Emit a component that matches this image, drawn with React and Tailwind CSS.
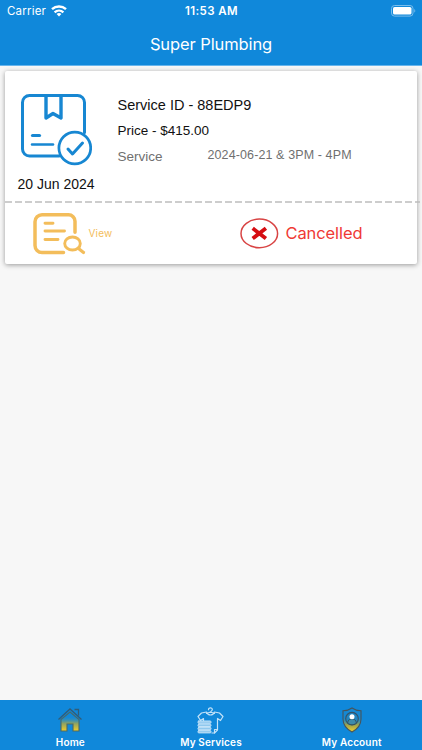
import React from 'react';

const Wifi = () => (
  <svg width="16" height="12" viewBox="0 0 16 12" fill="none" stroke="#fff" strokeWidth="2.4">
    <path d="M1 4.200C5 .5 11 .5 15 4.200" />
    <path d="M3.600 7.300c2.600-2.300 6.200-2.300 8.800 0" />
    <path d="M5.600 9C7.100 7.700 8.900 7.700 10.400 9L8 11.600Z" fill="#fff" stroke="none" />
  </svg>
);

const Battery = () => (
  <svg width="25" height="12" viewBox="0 0 25 12" fill="none">
    <rect x=".5" y=".5" width="21.5" height="10.600" rx="3" stroke="#79bdec" />
    <rect x="2" y="2" width="18.500" height="7.600" rx="1.600" fill="#fff" />
    <path d="M23.300 4v3.600c1.300-.5 1.300-3.100 0-3.600Z" fill="#79bdec" />
  </svg>
);

const PackageIcon = () => (
  <svg width="72" height="73" viewBox="0 0 72 73" fill="none" stroke="#1787d2" strokeWidth="3" strokeLinecap="round" strokeLinejoin="round">
    <path d="M39 63H9.500a7 7 0 0 1-7-7V9.500a7 7 0 0 1 7-7h48a7 7 0 0 1 7 7v30" />
    <path d="M26 3v22l7-4.500 8 4.500V3" strokeWidth="3.400" />
    <path d="M12.500 42.500h7" strokeWidth="3.200" />
    <path d="M12 51.500h21" strokeWidth="2.500" />
    <circle cx="54.800" cy="55" r="15.900" fill="#fff" strokeWidth="2.700" />
    <path d="m48 56 4.500 5L62.500 50" strokeWidth="3" />
  </svg>
);

const ViewIcon = () => (
  <svg width="53" height="42" viewBox="0 0 53 42" fill="none" stroke="#f3bd5b" strokeWidth="3.500" strokeLinecap="round" strokeLinejoin="round">
    <path d="M30.500 39.500H9a7 7 0 0 1-7-7V8.800a7 7 0 0 1 7-7h26.500a6.500 6.500 0 0 1 6.500 6.500v11" />
    <path d="M12 10.200h8M12 18h19.500M12 26.500h13" strokeWidth="2.900" />
    <ellipse cx="39.500" cy="30.500" rx="7.800" ry="6.500" strokeWidth="2.900" />
    <path d="m45.500 35.500 5 4" strokeWidth="3.200" />
  </svg>
);

const CancelIcon = () => (
  <svg width="39" height="31" viewBox="0 0 39 31" fill="none">
    <ellipse cx="19.300" cy="15.400" rx="18.300" ry="14.300" stroke="#d84444" strokeWidth="1.500" />
    <path d="m12.700 10.300 13.200 10.200M25.900 10.300 12.700 20.500" stroke="#d50d12" strokeWidth="3.800" />
  </svg>
);

const HomeIcon = () => (
  <svg width="26" height="26" viewBox="0 0 26 26" fill="none">
    <defs>
      <linearGradient id="houseFill" x1="0" y1="0" x2="0" y2="1">
        <stop offset=".2" stopColor="#1088da" stopOpacity="0" />
        <stop offset=".6" stopColor="#8ea263" />
        <stop offset="1" stopColor="#f2cd27" />
      </linearGradient>
    </defs>
    <path d="M4 12.500 13 5l9 7.500v11.500h-6v-7h-6v7H4Z" fill="url(#houseFill)" stroke="#4a6a67" strokeWidth="1.100" />
    <path d="M1.500 12.500 13 2l11.500 10.500M17.500 2.500H21.500v6" stroke="#315d78" strokeWidth="1.300" />
  </svg>
);

const ShirtIcon = () => (
  <svg width="27" height="27" viewBox="0 0 27 27" fill="none" stroke="#c3e2f8" strokeWidth="1.200" strokeLinejoin="round" strokeLinecap="round">
    <path d="M11.500 2.700C11.500.2 15.600.3 15.300 2.800 15.200 4 13.500 3.800 13.500 5.500M9.500 6.500l4-1.500 4 1.500" />
    <path d="M6.500 14V11.500L3.500 13.500 1 9.500 4.500 6 9.500 5c1.500 4 6.500 4 8 0l5 1L26 9.500 23.500 13.500l-3-2V23l-3 3H15" />
    <path d="M20.500 22.500h-3V26" />
    <g fill="#8fc8ee" strokeWidth="1">
      <rect x="1" y="14" width="13" height="2.300" rx=".8" />
      <rect x="1" y="17.200" width="13" height="2.300" rx=".8" />
      <rect x="1" y="20.400" width="13" height="2.300" rx=".8" />
      <rect x="1" y="23.600" width="13" height="2.300" rx=".8" />
    </g>
  </svg>
);

const AccountIcon = () => (
  <svg width="20" height="26" viewBox="0 0 20 26" fill="none">
    <defs>
      <linearGradient id="shieldFill" x1="0" y1="0" x2="0" y2="1">
        <stop offset=".4" stopColor="#268bbb" stopOpacity=".2" />
        <stop offset=".7" stopColor="#9da24b" />
        <stop offset="1" stopColor="#f3d22e" />
      </linearGradient>
    </defs>
    <path d="M10 1C7.200 3 4.200 3.700 1 3.700V12c0 6.200 4 10.300 9 13 5-2.700 9-6.800 9-13V3.700C15.800 3.700 12.800 3 10 1Z" fill="url(#shieldFill)" stroke="#46545b" strokeWidth="1.100" />
    <circle cx="10" cy="11.700" r="6.300" fill="#2085c0" stroke="#365266" strokeWidth="1.100" />
    <path d="M5.700 16c.2-3.200 2-4 4.300-4s4.100.8 4.300 4c-2.500 2.300-6.100 2.300-8.600 0Z" fill="#3e8bab" stroke="#354c54" strokeWidth=".8" />
    <circle cx="10" cy="9.700" r="2.500" fill="#fff" />
  </svg>
);

const tabs = [
  { label: 'Home', Icon: HomeIcon },
  { label: 'My Services', Icon: ShirtIcon },
  { label: 'My Account', Icon: AccountIcon },
];

export default function App() {
  return (
    <div className="flex h-[750px] w-[422px] flex-col overflow-hidden bg-[#f7f7f7] font-['Inter',sans-serif]">
      <header className="h-[66px] shrink-0 border-b border-[#67b5ed] bg-[#1088da] text-white">
        <div className="grid h-[22px] grid-cols-3 items-center pl-[7px] pr-[6px]">
          <div className="flex items-center gap-[5px]">
            <span className="pt-px text-[11.5px] tracking-[0.2px]">Carrier</span>
            <Wifi />
          </div>
          <span className="pt-px text-center text-[11.5px] font-semibold tracking-[0.4px]">11:53 AM</span>
          <div className="flex justify-end"><Battery /></div>
        </div>
        <h1 className="h-11 text-center text-[16.5px] leading-[44px] font-normal tracking-[-0.1px]">Super Plumbing</h1>
      </header>

      <main className="flex-1 pt-[5px] pl-[5px]">
        <article className="h-[193px] w-[412px] rounded-[2px] bg-white shadow-[0_1px_5px_rgba(0,0,0,0.38)]">
          <div className="flex h-[130px] pl-[12.5px] font-['Liberation_Sans',sans-serif] text-[#111]">
            <div className="w-[100px] pt-[22px]">
              <div className="pl-[2px]"><PackageIcon /></div>
              <p className="mt-[9px] text-[14px] leading-[18px] whitespace-nowrap">20 Jun 2024</p>
            </div>
            <div className="pt-[24px]">
              <p className="text-[14.500px] leading-5 whitespace-nowrap">Service ID - 88EDP9</p>
              <p className="mt-[6px] text-[13.500px] leading-5">Price - $415.00</p>
              <div className="mt-[4px] flex text-[#707070]">
                <span className="w-[90px] pt-[2px] text-[13.500px] leading-5">Service</span>
                <span className="text-[12.500px] leading-5 tracking-[0.11px] whitespace-nowrap">2024-06-21 &amp; 3PM - 4PM</span>
              </div>
            </div>
          </div>
          <svg className="block" width="415" height="2"><path d="M0 1H415" stroke="#bdbdbd" strokeWidth="1.600" strokeDasharray="7 3" /></svg>
          <div className="flex h-[61px] items-center pl-[27.5px]">
            <div className="flex w-[207px] items-center gap-[3px] text-[#f3bd5b]">
              <ViewIcon />
              <span className="text-[10px] tracking-[0.2px]">View</span>
            </div>
            <div className="flex items-center gap-[7px] text-[#ef3935]">
              <CancelIcon />
              <span className="text-[16.5px] font-normal tracking-[-0.1px]">Cancelled</span>
            </div>
          </div>
        </article>
      </main>

      <nav className="grid h-[50px] shrink-0 grid-cols-3 bg-[#1088da] text-white">
        {tabs.map(({ label, Icon }) => (
          <button key={label} className="flex flex-col items-center pt-[6px]">
            <span className="flex h-[28px] items-center"><Icon /></span>
            <span className="text-[10px] leading-4 font-semibold tracking-[0.15px]">{label}</span>
          </button>
        ))}
      </nav>
    </div>
  );
}
